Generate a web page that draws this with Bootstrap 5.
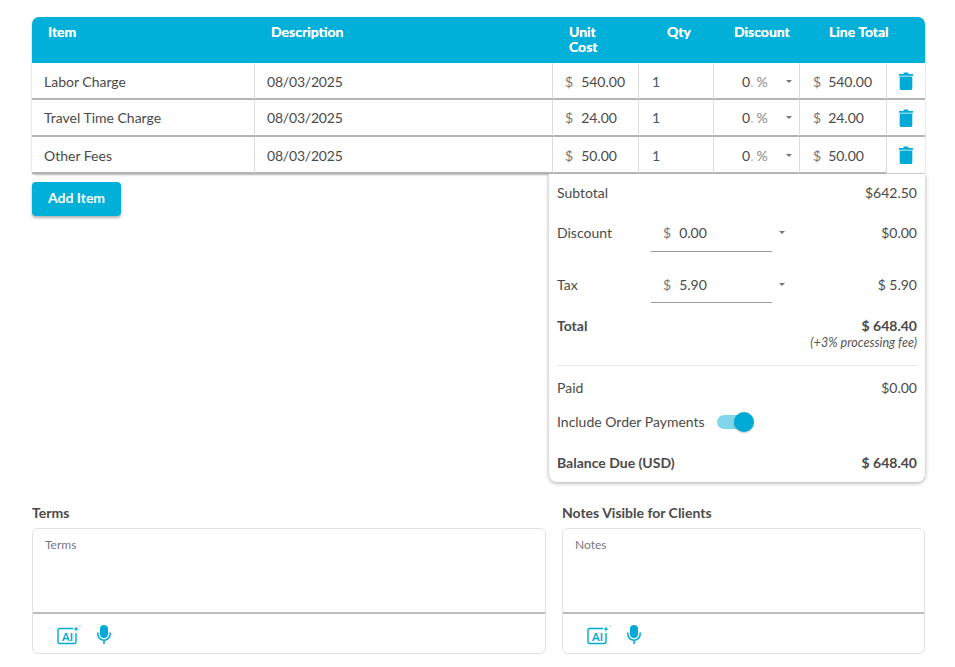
<!DOCTYPE html>
<html lang="en">
<head>
<meta charset="utf-8">
<title>Invoice items</title>
<link href="https://cdn.jsdelivr.net/npm/bootstrap@5.3.0/dist/css/bootstrap.min.css" rel="stylesheet">
<style>
html,body{background:#fff;}
body{font-family:Lato,"Liberation Sans",sans-serif;font-size:14px;color:#4a4a4a;overflow:hidden;height:667px;}
.page-wrap{padding:17px 30px 0 32px;}
.items-table{table-layout:fixed;width:893px;margin:0;border-collapse:separate;border-spacing:0;box-shadow:0 1px 2px rgba(0,0,0,.3);border-radius:8px 8px 4px 4px;}
.items-table thead th{background:#00b0d9;color:#fff;font-weight:700;font-size:14px;line-height:15px;height:46px;padding:7px 0 0 0;vertical-align:top;border:0;text-shadow:0 0 .4px #fff;white-space:nowrap;}
.items-table thead th:first-child{border-top-left-radius:7px;padding-left:16px;}
.items-table thead th:last-child{border-top-right-radius:7px;}
.items-table td{height:37px;padding:0 0 0 12px;vertical-align:middle;font-size:14px;color:#4a4a4a;border-bottom:2px solid #b4b4b4;border-right:1px solid #dcdcdc;background:#fff;box-shadow:none;white-space:nowrap;}
.items-table tr:first-child td{padding-top:2px;}
.items-table tr:last-child td{padding-top:1px;}
.items-table td:last-child,.items-table tr:first-child td:last-child,.items-table tr:last-child td:last-child{border-right:0;padding:0;text-align:center;}
.items-table td.cell-desc{padding-left:12px;letter-spacing:-.2px;}
.items-table td.cell-total{padding-left:13px;}
.items-table td.cell-qty{padding-left:13px;color:#3d5a70;}
.items-table td.cell-disc{padding-left:28px;padding-right:7px;}
.items-table tr:last-child td:last-child{border-bottom:1px solid #cfcfcf;}
.trash-ico{display:block;margin:0 auto;}
.cur{color:#777;margin-right:8px;}
.cell-total .cur{margin-right:7px;}
.pct{color:#888;margin-left:3px;}
.zero-dot{color:#a8c4d0;}
.caret-down{display:inline-block;width:0;height:0;border-left:3.5px solid transparent;border-right:3.5px solid transparent;border-top:3.5px solid #777;}
.h-th-desc{padding-left:16px !important;}
.h-th-unit{padding-left:16px !important;}
.h-th-qty{padding-left:28px !important;}
.h-th-disc{padding-left:20px !important;}
.h-th-total{padding-left:29px !important;}
.mid-row{align-items:flex-start;}
.btn-add{background:#00b0d9;border:0;color:#fff;font-weight:700;font-size:14px;width:89px;height:34px;padding:0 0 4px;margin-top:8px;border-radius:4px;box-shadow:0 2px 3px rgba(0,0,0,.3);}
.btn-add:hover{background:#00b0d9;color:#fff;}
.totals-panel{width:376px;height:308px;padding:10px 8px 0 8px;border-radius:0 0 8px 8px;box-shadow:0 1px 4px rgba(0,0,0,.35);background:#fff;font-size:14px;clip-path:inset(0 -8px -8px -8px);}
.t-line{display:flex;align-items:center;justify-content:space-between;line-height:18px;}
.t-field{width:121px;height:36px;border-bottom:1px solid #9a9a9a;padding:0 0 0 12px;margin-left:38px;display:flex;align-items:center;}
.t-field-tall{height:37px;}
.t-field-wrap{display:flex;align-items:flex-start;flex-grow:1;}
.t-label{width:56px;}
.t-fieldline{align-items:flex-start;}
.t-fieldline .t-label,.t-fieldline .t-val{line-height:36px;}
.t-caret{margin:16px 0 0 7px;}
.fee-note{font-size:12.6px;font-style:italic;text-align:right;line-height:13px;margin-top:1px;color:#555;}
.t-rule{border-top:1px solid #e6e6e6;margin:16px 0 13px;}
.toggle-track{position:relative;display:inline-block;width:32px;height:14px;border-radius:7px;background:#80d7ec;margin-left:12px;}
.toggle-knob{position:absolute;right:-5px;top:-3px;width:20px;height:20px;border-radius:50%;background:#00aad6;box-shadow:0 1px 2px rgba(0,0,0,.25);}
.lower-row{margin-top:22px;display:flex;gap:16px;width:893px;}
.note-col-a{width:514px;}
.note-col-b{width:363px;}
.note-title{font-weight:700;font-size:14px;line-height:18px;margin-bottom:6px;color:#4a4a4a;}
.note-box{height:126px;border:1px solid #e2e2e2;border-radius:6px;display:flex;flex-direction:column;background:#fff;}
.note-text{height:85px;border-bottom:2px solid #bdbdbd;padding:9px 12px;font-size:12px;color:#7b7480;line-height:14px;}
.note-tools{flex-grow:1;display:flex;align-items:center;padding-left:24px;gap:16px;padding-top:2px;}
</style>
</head>
<body>
<div class="page-wrap">
  <table class="table items-table">
    <colgroup><col style="width:223px"><col style="width:298px"><col style="width:86px"><col style="width:75px"><col style="width:86px"><col style="width:87px"><col style="width:38px"></colgroup>
    <thead>
      <tr>
        <th>Item</th><th class="h-th-desc">Description</th><th class="h-th-unit">Unit<br>Cost</th><th class="h-th-qty">Qty</th><th class="h-th-disc">Discount</th><th class="h-th-total">Line Total</th><th></th>
      </tr>
    </thead>
    <tbody>
      <tr>
        <td>Labor Charge</td><td class="cell-desc">08/03/2025</td>
        <td><span class="cur">$</span>540.00</td><td class="cell-qty">1</td>
        <td class="cell-disc"><div class="d-flex align-items-center"><span>0</span><span class="zero-dot">.</span><span class="pct">%</span><span class="caret-down ms-auto"></span></div></td>
        <td class="cell-total"><span class="cur">$</span>540.00</td>
        <td><svg class="trash-ico" width="14" height="18" viewBox="0 0 14 18" aria-hidden="true"><path fill="#00aad6" d="M0 2h14v1.700H0zM4.600 .4h4.800V2H4.600zM.7 4.500h12.600v11.700c0 1-.8 1.800-1.800 1.800h-9c-1 0-1.800-.8-1.800-1.800z"/></svg></td>
      </tr>
      <tr>
        <td>Travel Time Charge</td><td class="cell-desc">08/03/2025</td>
        <td><span class="cur">$</span>24.00</td><td class="cell-qty">1</td>
        <td class="cell-disc"><div class="d-flex align-items-center"><span>0</span><span class="zero-dot">.</span><span class="pct">%</span><span class="caret-down ms-auto"></span></div></td>
        <td class="cell-total"><span class="cur">$</span>24.00</td>
        <td><svg class="trash-ico" width="14" height="18" viewBox="0 0 14 18" aria-hidden="true"><path fill="#00aad6" d="M0 2h14v1.700H0zM4.600 .4h4.800V2H4.600zM.7 4.500h12.600v11.700c0 1-.8 1.800-1.800 1.800h-9c-1 0-1.800-.8-1.800-1.800z"/></svg></td>
      </tr>
      <tr>
        <td>Other Fees</td><td class="cell-desc">08/03/2025</td>
        <td><span class="cur">$</span>50.00</td><td class="cell-qty">1</td>
        <td class="cell-disc"><div class="d-flex align-items-center"><span>0</span><span class="zero-dot">.</span><span class="pct">%</span><span class="caret-down ms-auto"></span></div></td>
        <td class="cell-total"><span class="cur">$</span>50.00</td>
        <td><svg class="trash-ico" width="14" height="18" viewBox="0 0 14 18" aria-hidden="true"><path fill="#00aad6" d="M0 2h14v1.700H0zM4.600 .4h4.800V2H4.600zM.7 4.500h12.600v11.700c0 1-.8 1.800-1.800 1.800h-9c-1 0-1.800-.8-1.800-1.800z"/></svg></td>
      </tr>
    </tbody>
  </table>

  <div class="d-flex justify-content-between mid-row" style="width:893px">
    <button type="button" class="btn btn-add">Add Item</button>
    <div class="totals-panel">
      <div class="t-line"><span>Subtotal</span><span>$642.50</span></div>
      <div class="t-line t-fieldline" style="margin-top:13px">
        <div class="t-field-wrap"><span class="t-label">Discount</span><div class="t-field t-field-tall"><span class="cur">$</span>0.00</div><span class="caret-down t-caret"></span></div>
        <span class="t-val">$0.00</span>
      </div>
      <div class="t-line t-fieldline" style="margin-top:15px">
        <div class="t-field-wrap"><span class="t-label">Tax</span><div class="t-field"><span class="cur">$</span>5.90</div><span class="caret-down t-caret"></span></div>
        <span class="t-val">$ 5.90</span>
      </div>
      <div class="t-line fw-bold" style="margin-top:14px"><span>Total</span><span>$ 648.40</span></div>
      <div class="fee-note">(+3% processing fee)</div>
      <div class="t-rule"></div>
      <div class="t-line"><span>Paid</span><span>$0.00</span></div>
      <div class="t-line" style="margin-top:16px;justify-content:flex-start"><span>Include Order Payments</span><span class="toggle-track"><span class="toggle-knob"></span></span></div>
      <div class="t-line fw-bold" style="margin-top:23px"><span>Balance Due (USD)</span><span>$ 648.40</span></div>
    </div>
  </div>

  <div class="lower-row">
    <div class="note-col-a">
      <div class="note-title">Terms</div>
      <div class="note-box">
        <div class="note-text">Terms</div>
        <div class="note-tools">
          <svg width="24" height="20" viewBox="0 0 24 20" aria-hidden="true"><path fill="none" stroke="#00aad6" stroke-width="1.400" d="M16 3.500H2.500a1.500 1.500 0 0 0-1.500 1.500v12a1.500 1.500 0 0 0 1.500 1.500h15a1.500 1.500 0 0 0 1.500-1.500V8"/><text x="5" y="15.500" font-family="Lato,sans-serif" font-size="11" font-weight="700" fill="#00aad6">AI</text><path fill="#00aad6" d="M19 1l.7 2.300L22 4l-2.300.7L19 7l-.7-2.300L16 4l2.300-.7zM23 0l.3.7.7.3-.7.3-.3.7-.3-.7-.7-.3.7-.3z"/></svg>
          <svg width="14" height="19" viewBox="0 0 14 19" aria-hidden="true"><rect x="3" y="0" width="8" height="13" rx="4" fill="#00aad6"/><path fill="none" stroke="#00aad6" stroke-width="1.500" d="M.8 7.500v1.500a6.200 6.200 0 0 0 12.400 0V7.500M7 15.200V19"/></svg>
        </div>
      </div>
    </div>
    <div class="note-col-b">
      <div class="note-title">Notes Visible for Clients</div>
      <div class="note-box">
        <div class="note-text">Notes</div>
        <div class="note-tools">
          <svg width="24" height="20" viewBox="0 0 24 20" aria-hidden="true"><path fill="none" stroke="#00aad6" stroke-width="1.400" d="M16 3.500H2.500a1.500 1.500 0 0 0-1.500 1.500v12a1.500 1.500 0 0 0 1.500 1.500h15a1.500 1.500 0 0 0 1.500-1.500V8"/><text x="5" y="15.500" font-family="Lato,sans-serif" font-size="11" font-weight="700" fill="#00aad6">AI</text><path fill="#00aad6" d="M19 1l.7 2.300L22 4l-2.300.7L19 7l-.7-2.300L16 4l2.300-.7zM23 0l.3.7.7.3-.7.3-.3.7-.3-.7-.7-.3.7-.3z"/></svg>
          <svg width="14" height="19" viewBox="0 0 14 19" aria-hidden="true"><rect x="3" y="0" width="8" height="13" rx="4" fill="#00aad6"/><path fill="none" stroke="#00aad6" stroke-width="1.500" d="M.8 7.500v1.500a6.200 6.200 0 0 0 12.400 0V7.500M7 15.200V19"/></svg>
        </div>
      </div>
    </div>
  </div>
</div>
<script src="https://cdn.jsdelivr.net/npm/bootstrap@5.3.0/dist/js/bootstrap.bundle.min.js"></script>
</body>
</html>
